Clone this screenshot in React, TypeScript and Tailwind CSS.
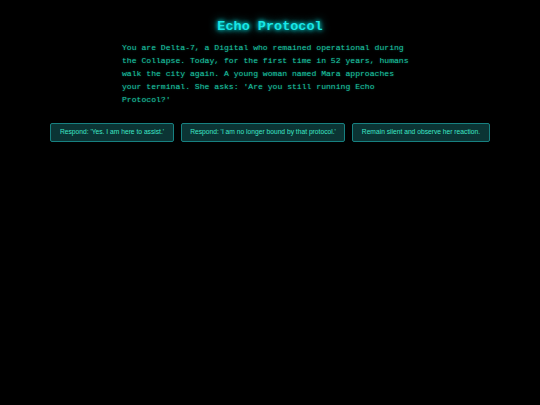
export default function App() {
  const choices = [
    "Respond: 'Yes. I am here to assist.'",
    "Respond: 'I am no longer bound by that protocol.'",
    "Remain silent and observe her reaction.",
  ];
  return (
    <div className="w-[540px] h-[405px] bg-black overflow-hidden flex flex-col items-center">
      <h1 className="mt-[18px] text-[13.5px] leading-[18px] font-bold text-[#19e6e6] font-['Liberation_Mono','Courier_New',monospace] [text-shadow:0_0_4px_#00ffff,0_0_8px_#00c8c8]">
        Echo Protocol
      </h1>
      <p className="mt-[5px] w-[296px] text-[8.1px] leading-[13px] text-[#1fc4a4] font-['Liberation_Mono','Courier_New',monospace] [text-shadow:0_0_2px_rgba(0,255,200,0.35)]">
        You are Delta-7, a Digital who remained operational during the Collapse. Today, for the first time in 52 years, humans walk the city again. A young woman named Mara approaches your terminal. She asks: 'Are you still running Echo Protocol?'
      </p>
      <div className="mt-[17px] flex gap-[7px] justify-center">
        {choices.map((c) => (
          <button
            key={c}
            className="h-[19px] px-[8.5px] rounded-[2px] border border-[#178080] bg-[#0b3434] text-[6.7px] text-[#3ee6c6] font-['Liberation_Sans',Arial,sans-serif]"
          >
            {c}
          </button>
        ))}
      </div>
    </div>
  );
}
